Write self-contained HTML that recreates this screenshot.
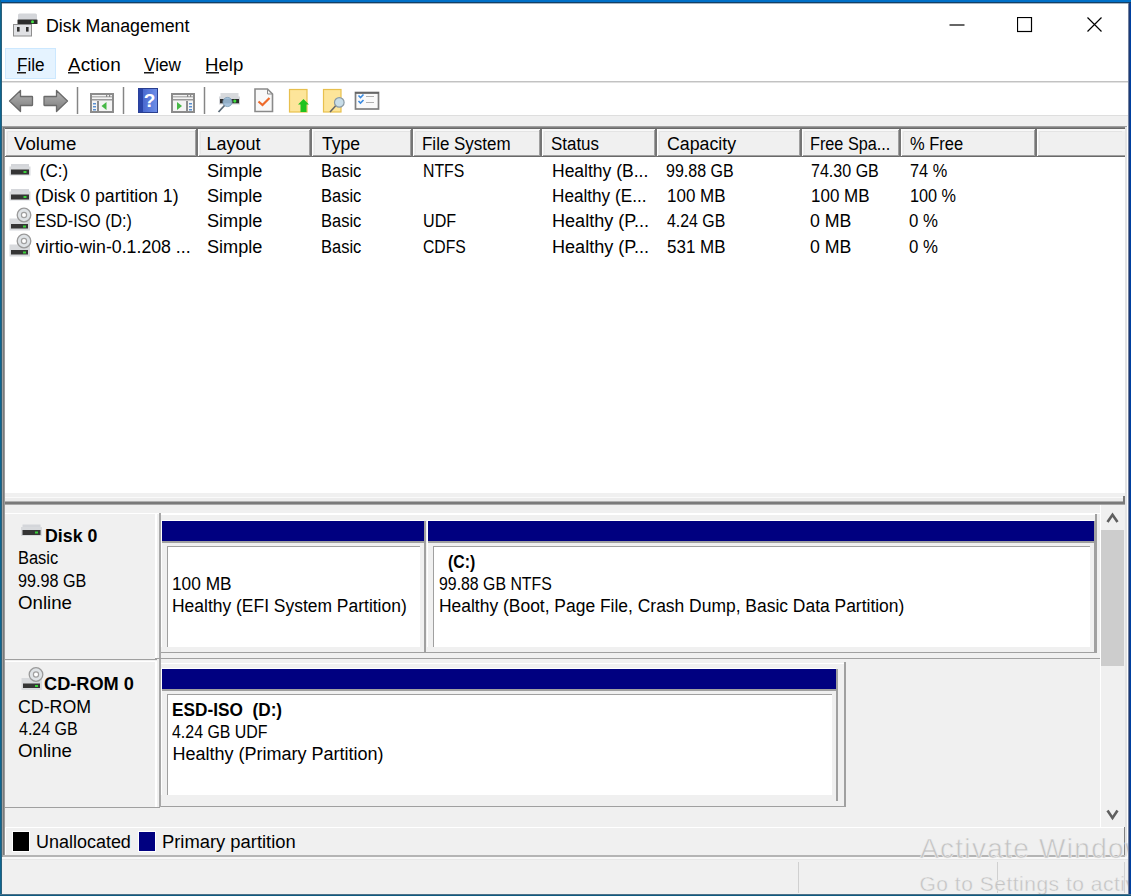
<!DOCTYPE html>
<html><head><meta charset="utf-8"><style>
html,body{margin:0;padding:0;}
body{width:1131px;height:896px;position:relative;overflow:hidden;font-family:"Liberation Sans", sans-serif;}
body>div,body>span,body>svg{position:absolute;}
.t{white-space:pre;line-height:normal;}
</style></head><body>
<div style="left:0px;top:0px;width:1131px;height:896px;background:#f0f0f0;"></div><div style="left:2px;top:3px;width:1126px;height:113px;background:#ffffff;"></div><div style="left:2px;top:81px;width:1126px;height:1px;background:#c2c2c2;"></div><div style="left:2px;top:82px;width:1126px;height:1px;background:#e2e2e2;"></div><div style="left:2px;top:115px;width:1126px;height:1px;background:#dedede;"></div><svg style="left:12px;top:12px" width="28" height="28" viewBox="0 0 28 28"><rect x="6" y="1.5" width="19" height="6.5" rx="1.5" fill="#d4d6da"/><rect x="5.5" y="7.5" width="20" height="4.5" rx="0.5" fill="#2c2c2c"/><circle cx="20.5" cy="9.8" r="1.5" fill="#46e046"/><rect x="1.5" y="12.5" width="18" height="11.5" fill="#e0e1e4" stroke="#8e8e8e" stroke-width="1"/><rect x="5" y="15" width="2.6" height="4.6" fill="#333"/><rect x="14" y="15" width="2.6" height="4.6" fill="#333"/></svg><span class="t" style="left:45.61px;top:15.71px;font-size:18px;font-weight:normal;color:#000;transform:scaleX(0.9889);transform-origin:0 0;">Disk Management</span><svg style="left:949px;top:17px" width="16" height="16" viewBox="0 0 16 16"><line x1="0.5" y1="8" x2="15.5" y2="8" stroke="#000" stroke-width="1.2"/></svg><svg style="left:1017px;top:17px" width="16" height="16" viewBox="0 0 16 16"><rect x="0.5" y="0.5" width="14" height="14" fill="none" stroke="#000" stroke-width="1.2"/></svg><svg style="left:1087px;top:17px" width="16" height="16" viewBox="0 0 16 16"><path d="M0.5 0.5L14.5 14.5M14.5 0.5L0.5 14.5" stroke="#000" stroke-width="1.2"/></svg><div style="left:5px;top:48px;width:51px;height:31px;background:#e5f3ff;box-sizing:border-box;border:1px solid #cce8ff;"></div><span class="t" style="left:17.05px;top:54.71px;font-size:18px;font-weight:normal;color:#000;transform:scaleX(0.9519);transform-origin:0 0;">File</span><div style="left:17px;top:72px;width:9px;height:1px;background:#1a1a1a;"></div><div style="left:17px;top:73px;width:9px;height:1px;background:#8a8a8a;"></div><span class="t" style="left:67.6px;top:54.71px;font-size:18px;font-weight:normal;color:#000;transform:scaleX(1.0531);transform-origin:0 0;">Action</span><div style="left:67.6px;top:72px;width:11.900000000000006px;height:1px;background:#1a1a1a;"></div><div style="left:67.6px;top:73px;width:11.900000000000006px;height:1px;background:#8a8a8a;"></div><span class="t" style="left:144.0px;top:54.71px;font-size:18px;font-weight:normal;color:#000;transform:scaleX(0.9538);transform-origin:0 0;">View</span><div style="left:144px;top:72px;width:10.199999999999989px;height:1px;background:#1a1a1a;"></div><div style="left:144px;top:73px;width:10.199999999999989px;height:1px;background:#8a8a8a;"></div><span class="t" style="left:204.77px;top:54.71px;font-size:18px;font-weight:normal;color:#000;transform:scaleX(1.0343);transform-origin:0 0;">Help</span><div style="left:205.8px;top:72px;width:13.0px;height:1px;background:#1a1a1a;"></div><div style="left:205.8px;top:73px;width:13.0px;height:1px;background:#8a8a8a;"></div><svg style="left:6px;top:86px" width="70" height="30" viewBox="0 0 70 30"><defs><linearGradient id="ga" x1="0" y1="0" x2="0" y2="1"><stop offset="0" stop-color="#b4b4b4"/><stop offset="1" stop-color="#7c7c7c"/></linearGradient><linearGradient id="gb" x1="0" y1="0" x2="1" y2="0"><stop offset="0" stop-color="#2a45a8"/><stop offset="0.25" stop-color="#2a45a8"/><stop offset="0.26" stop-color="#4a6ad0"/><stop offset="1" stop-color="#6f8fe8"/></linearGradient></defs><path d="M3.5 15 L14.5 4.5 L14.5 10.5 L26 10.5 Q26.5 10.5 26.5 11 L26.5 19 Q26.5 19.5 26 19.5 L14.5 19.5 L14.5 25.5 Z" fill="url(#ga)" stroke="#6a6a6a" stroke-width="1.3" stroke-linejoin="round"/><path d="M61.5 15 L50.5 4.5 L50.5 10.5 L38.5 10.5 Q38 10.5 38 11 L38 19 Q38 19.5 38.5 19.5 L50.5 19.5 L50.5 25.5 Z" fill="url(#ga)" stroke="#6a6a6a" stroke-width="1.3" stroke-linejoin="round"/></svg><div style="left:76px;top:87px;width:3px;height:27px;background:#e2e2e2;"></div><div style="left:77px;top:87px;width:1px;height:27px;background:#858585;"></div><div style="left:122px;top:87px;width:3px;height:27px;background:#e2e2e2;"></div><div style="left:123px;top:87px;width:1px;height:27px;background:#858585;"></div><div style="left:203px;top:87px;width:3px;height:27px;background:#e2e2e2;"></div><div style="left:204px;top:87px;width:1px;height:27px;background:#858585;"></div><svg style="left:90px;top:93px" width="24" height="20" viewBox="0 0 24 20"><rect x="1" y="1" width="22" height="18" fill="#f4f4f4" stroke="#8c8c8c" stroke-width="2"/><rect x="2" y="3" width="20" height="1.5" fill="#b8b8b8"/><rect x="2" y="6" width="20" height="1.5" fill="#9a9a9a"/><rect x="16" y="2" width="1.2" height="2" fill="#888"/><rect x="19" y="2" width="1.2" height="2" fill="#888"/><rect x="7" y="8" width="2" height="11" fill="#8c8c8c"/><rect x="3" y="10" width="3" height="1.5" fill="#5a90d0"/><rect x="3" y="13" width="3" height="1.5" fill="#5a90d0"/><rect x="3" y="16" width="3" height="1.5" fill="#5a90d0"/><path d="M11.5 13 L16.5 9 L16.5 17 Z" fill="#46b846"/></svg><svg style="left:171px;top:93px" width="24" height="20" viewBox="0 0 24 20"><rect x="1" y="1" width="22" height="18" fill="#f4f4f4" stroke="#8c8c8c" stroke-width="2"/><rect x="2" y="3" width="20" height="1.5" fill="#b8b8b8"/><rect x="2" y="6" width="20" height="1.5" fill="#9a9a9a"/><rect x="16" y="2" width="1.2" height="2" fill="#888"/><rect x="19" y="2" width="1.2" height="2" fill="#888"/><rect x="15" y="8" width="2" height="11" fill="#8c8c8c"/><rect x="18" y="10" width="3" height="1.5" fill="#5a90d0"/><rect x="18" y="13" width="3" height="1.5" fill="#5a90d0"/><rect x="18" y="16" width="3" height="1.5" fill="#5a90d0"/><path d="M11 13 L6 9 L6 17 Z" fill="#46b846"/></svg><svg style="left:138px;top:88px" width="20" height="25" viewBox="0 0 20 25"><defs><linearGradient id="ga" x1="0" y1="0" x2="0" y2="1"><stop offset="0" stop-color="#b4b4b4"/><stop offset="1" stop-color="#7c7c7c"/></linearGradient><linearGradient id="gb" x1="0" y1="0" x2="1" y2="0"><stop offset="0" stop-color="#2a45a8"/><stop offset="0.25" stop-color="#2a45a8"/><stop offset="0.26" stop-color="#4a6ad0"/><stop offset="1" stop-color="#6f8fe8"/></linearGradient></defs><rect x="0" y="0.5" width="19.5" height="24" fill="url(#gb)"/><rect x="0" y="0.5" width="19.5" height="24" fill="none" stroke="#2a3f90" stroke-width="1"/><text x="11.5" y="19" font-family="Liberation Sans" font-weight="bold" font-size="19" fill="#fff" text-anchor="middle">?</text></svg><svg style="left:216px;top:90px" width="26" height="24" viewBox="0 0 26 24"><rect x="4.5" y="3" width="18" height="4" fill="#d8dadd"/><rect x="3" y="6.5" width="21" height="8" fill="#d6d8dc"/><rect x="4" y="9" width="19" height="4.3" fill="#2e2e2e"/><circle cx="18.8" cy="11.1" r="1.6" fill="#3ee03e"/><circle cx="11.5" cy="12" r="4.6" fill="#9cbcd8" fill-opacity="0.9" stroke="#7a9ab4" stroke-width="0.8"/><line x1="8.5" y1="15.5" x2="2.5" y2="22" stroke="#5a6a78" stroke-width="1.8"/></svg><svg style="left:254px;top:88px" width="20" height="25" viewBox="0 0 20 25"><path d="M1 1 H13.5 L18.5 6 V23.5 H1 Z" fill="#f8f8f8" stroke="#8a8a8a" stroke-width="1.6"/><path d="M13.5 1 V6 H18.5" fill="none" stroke="#8a8a8a" stroke-width="1"/><path d="M4.5 13.5 L8.5 17 L15.5 10" fill="none" stroke="#ee6a2a" stroke-width="2.2"/></svg><svg style="left:288px;top:88px" width="24" height="26" viewBox="0 0 24 26"><rect x="1.5" y="1.5" width="17.5" height="22.5" fill="#fde59a" stroke="#e8c04e" stroke-width="1.2"/><path d="M15.5 11 L21 16.5 L18.5 16.5 L18.5 24 L12.5 24 L12.5 16.5 L10 16.5 Z" fill="#1fc21f"/></svg><svg style="left:322px;top:88px" width="26" height="26" viewBox="0 0 26 26"><rect x="1.5" y="1.5" width="17.5" height="22.5" fill="#fde59a" stroke="#e8c04e" stroke-width="1.2"/><circle cx="17.3" cy="14.4" r="4.8" fill="#c8dde8" stroke="#8a9aa4" stroke-width="1.2"/><line x1="13.5" y1="18" x2="8" y2="24" stroke="#666" stroke-width="1.6"/></svg><svg style="left:354px;top:91px" width="26" height="20" viewBox="0 0 26 20"><rect x="1.5" y="1.5" width="23" height="16.5" fill="#fafafa" stroke="#7e7e7e" stroke-width="1.7"/><rect x="1" y="1" width="24" height="1.8" fill="#666"/><path d="M4.5 4.5 L6.5 6.5 L9.5 3.5" fill="none" stroke="#3a8ae0" stroke-width="1.6"/><path d="M4.5 10 L6.5 12 L9.5 9" fill="none" stroke="#3a8ae0" stroke-width="1.6"/><rect x="12" y="5" width="8" height="1" fill="#b0b0b0"/><rect x="12" y="11" width="8" height="1" fill="#b0b0b0"/></svg><div style="left:2px;top:126px;width:1126px;height:731px;background:#f0f0f0;"></div><div style="left:2px;top:126px;width:1126px;height:1px;background:#a0a0a0;"></div><div style="left:2px;top:126px;width:1px;height:731px;background:#a0a0a0;"></div><div style="left:3px;top:127px;width:1124px;height:1px;background:#808080;"></div><div style="left:3px;top:128px;width:1124px;height:1px;background:#696969;"></div><div style="left:3px;top:127px;width:1px;height:729px;background:#7a7a7a;"></div><div style="left:4px;top:128px;width:1px;height:728px;background:#9a9a9a;"></div><div style="left:1125px;top:127px;width:2px;height:729px;background:#e3e3e3;"></div><div style="left:1127px;top:126px;width:1px;height:731px;background:#ffffff;"></div><div style="left:5px;top:129px;width:1120px;height:364px;background:#ffffff;"></div><div style="left:5px;top:129px;width:1px;height:726px;background:#ffffff;"></div><div style="left:3px;top:855px;width:1122px;height:2px;background:#b4b4b4;"></div><div style="left:2px;top:857px;width:1126px;height:2px;background:#f8f8f8;"></div><div style="left:2px;top:859px;width:1126px;height:1px;background:#e6e6e6;"></div><div style="left:5px;top:129px;width:1120px;height:28px;background:#f0f0f0;"></div><div style="left:5px;top:129px;width:193px;height:2px;background:#f8f8f8;"></div><div style="left:5px;top:129px;width:1px;height:27px;background:#ffffff;"></div><div style="left:7px;top:131px;width:188px;height:1px;background:#e4e4e4;"></div><div style="left:7px;top:131px;width:1px;height:23px;background:#e8e8e8;"></div><div style="left:6px;top:155px;width:191px;height:1px;background:#a0a0a0;"></div><div style="left:195px;top:130px;width:1px;height:26px;background:#a0a0a0;"></div><div style="left:5px;top:156px;width:193px;height:1px;background:#696969;"></div><div style="left:196px;top:129px;width:2px;height:28px;background:#767676;"></div><span class="t" style="left:13.6px;top:134.21px;font-size:18px;font-weight:normal;color:#000;transform:scaleX(1.0373);transform-origin:0 0;">Volume</span><div style="left:198px;top:129px;width:114px;height:2px;background:#f8f8f8;"></div><div style="left:198px;top:129px;width:1px;height:27px;background:#ffffff;"></div><div style="left:200px;top:131px;width:109px;height:1px;background:#e4e4e4;"></div><div style="left:200px;top:131px;width:1px;height:23px;background:#e8e8e8;"></div><div style="left:199px;top:155px;width:112px;height:1px;background:#a0a0a0;"></div><div style="left:309px;top:130px;width:1px;height:26px;background:#a0a0a0;"></div><div style="left:198px;top:156px;width:114px;height:1px;background:#696969;"></div><div style="left:310px;top:129px;width:2px;height:28px;background:#767676;"></div><span class="t" style="left:206.5px;top:134.21px;font-size:18px;font-weight:normal;color:#000;transform:scaleX(1.0000);transform-origin:0 0;">Layout</span><div style="left:312px;top:129px;width:101px;height:2px;background:#f8f8f8;"></div><div style="left:312px;top:129px;width:1px;height:27px;background:#ffffff;"></div><div style="left:314px;top:131px;width:96px;height:1px;background:#e4e4e4;"></div><div style="left:314px;top:131px;width:1px;height:23px;background:#e8e8e8;"></div><div style="left:313px;top:155px;width:99px;height:1px;background:#a0a0a0;"></div><div style="left:410px;top:130px;width:1px;height:26px;background:#a0a0a0;"></div><div style="left:312px;top:156px;width:101px;height:1px;background:#696969;"></div><div style="left:411px;top:129px;width:2px;height:28px;background:#767676;"></div><span class="t" style="left:321.6px;top:134.21px;font-size:18px;font-weight:normal;color:#000;transform:scaleX(0.9763);transform-origin:0 0;">Type</span><div style="left:413px;top:129px;width:129px;height:2px;background:#f8f8f8;"></div><div style="left:413px;top:129px;width:1px;height:27px;background:#ffffff;"></div><div style="left:415px;top:131px;width:124px;height:1px;background:#e4e4e4;"></div><div style="left:415px;top:131px;width:1px;height:23px;background:#e8e8e8;"></div><div style="left:414px;top:155px;width:127px;height:1px;background:#a0a0a0;"></div><div style="left:539px;top:130px;width:1px;height:26px;background:#a0a0a0;"></div><div style="left:413px;top:156px;width:129px;height:1px;background:#696969;"></div><div style="left:540px;top:129px;width:2px;height:28px;background:#767676;"></div><span class="t" style="left:422.16px;top:134.21px;font-size:18px;font-weight:normal;color:#000;transform:scaleX(0.9424);transform-origin:0 0;">File System</span><div style="left:542px;top:129px;width:115px;height:2px;background:#f8f8f8;"></div><div style="left:542px;top:129px;width:1px;height:27px;background:#ffffff;"></div><div style="left:544px;top:131px;width:110px;height:1px;background:#e4e4e4;"></div><div style="left:544px;top:131px;width:1px;height:23px;background:#e8e8e8;"></div><div style="left:543px;top:155px;width:113px;height:1px;background:#a0a0a0;"></div><div style="left:654px;top:130px;width:1px;height:26px;background:#a0a0a0;"></div><div style="left:542px;top:156px;width:115px;height:1px;background:#696969;"></div><div style="left:655px;top:129px;width:2px;height:28px;background:#767676;"></div><span class="t" style="left:550.96px;top:134.21px;font-size:18px;font-weight:normal;color:#000;transform:scaleX(0.9400);transform-origin:0 0;">Status</span><div style="left:657px;top:129px;width:145px;height:2px;background:#f8f8f8;"></div><div style="left:657px;top:129px;width:1px;height:27px;background:#ffffff;"></div><div style="left:659px;top:131px;width:140px;height:1px;background:#e4e4e4;"></div><div style="left:659px;top:131px;width:1px;height:23px;background:#e8e8e8;"></div><div style="left:658px;top:155px;width:143px;height:1px;background:#a0a0a0;"></div><div style="left:799px;top:130px;width:1px;height:26px;background:#a0a0a0;"></div><div style="left:657px;top:156px;width:145px;height:1px;background:#696969;"></div><div style="left:800px;top:129px;width:2px;height:28px;background:#767676;"></div><span class="t" style="left:666.51px;top:134.21px;font-size:18px;font-weight:normal;color:#000;transform:scaleX(0.9870);transform-origin:0 0;">Capacity</span><div style="left:802px;top:129px;width:99px;height:2px;background:#f8f8f8;"></div><div style="left:802px;top:129px;width:1px;height:27px;background:#ffffff;"></div><div style="left:804px;top:131px;width:94px;height:1px;background:#e4e4e4;"></div><div style="left:804px;top:131px;width:1px;height:23px;background:#e8e8e8;"></div><div style="left:803px;top:155px;width:97px;height:1px;background:#a0a0a0;"></div><div style="left:898px;top:130px;width:1px;height:26px;background:#a0a0a0;"></div><div style="left:802px;top:156px;width:99px;height:1px;background:#696969;"></div><div style="left:899px;top:129px;width:2px;height:28px;background:#767676;"></div><span class="t" style="left:810.2px;top:134.21px;font-size:18px;font-weight:normal;color:#000;transform:scaleX(0.9023);transform-origin:0 0;">Free Spa...</span><div style="left:901px;top:129px;width:136px;height:2px;background:#f8f8f8;"></div><div style="left:901px;top:129px;width:1px;height:27px;background:#ffffff;"></div><div style="left:903px;top:131px;width:131px;height:1px;background:#e4e4e4;"></div><div style="left:903px;top:131px;width:1px;height:23px;background:#e8e8e8;"></div><div style="left:902px;top:155px;width:134px;height:1px;background:#a0a0a0;"></div><div style="left:1034px;top:130px;width:1px;height:26px;background:#a0a0a0;"></div><div style="left:901px;top:156px;width:136px;height:1px;background:#696969;"></div><div style="left:1035px;top:129px;width:2px;height:28px;background:#767676;"></div><span class="t" style="left:909.98px;top:134.21px;font-size:18px;font-weight:normal;color:#000;transform:scaleX(0.9161);transform-origin:0 0;">% Free</span><div style="left:1037px;top:129px;width:88px;height:2px;background:#f8f8f8;"></div><div style="left:1037px;top:129px;width:1px;height:27px;background:#ffffff;"></div><div style="left:1039px;top:131px;width:83px;height:1px;background:#e4e4e4;"></div><div style="left:1039px;top:131px;width:1px;height:23px;background:#e8e8e8;"></div><div style="left:1038px;top:155px;width:87px;height:1px;background:#a0a0a0;"></div><div style="left:1037px;top:156px;width:88px;height:1px;background:#696969;"></div><svg style="left:8px;top:162px" width="24" height="14" viewBox="0 0 24 14"><rect x="3.0" y="2" width="18" height="3" fill="#d4d6da"/><rect x="1.5" y="4.5" width="21" height="9" fill="#d8dadd"/><rect x="3.0" y="7.5" width="18" height="5" fill="#353535"/><rect x="15.5" y="9" width="3" height="2" fill="#3ad23a"/></svg><span class="t" style="left:34.5px;top:160.71px;font-size:18px;font-weight:normal;color:#000;transform:scaleX(0.9500);transform-origin:0 0;"> (C:)</span><span class="t" style="left:206.59px;top:160.71px;font-size:18px;font-weight:normal;color:#000;transform:scaleX(1.0075);transform-origin:0 0;">Simple</span><span class="t" style="left:320.68px;top:160.71px;font-size:18px;font-weight:normal;color:#000;transform:scaleX(0.9163);transform-origin:0 0;">Basic</span><span class="t" style="left:422.52px;top:160.71px;font-size:18px;font-weight:normal;color:#000;transform:scaleX(0.8800);transform-origin:0 0;">NTFS</span><span class="t" style="left:551.73px;top:160.71px;font-size:18px;font-weight:normal;color:#000;transform:scaleX(0.9722);transform-origin:0 0;">Healthy (B...</span><span class="t" style="left:666.41px;top:160.71px;font-size:18px;font-weight:normal;color:#000;transform:scaleX(0.8892);transform-origin:0 0;">99.88 GB</span><span class="t" style="left:810.61px;top:160.71px;font-size:18px;font-weight:normal;color:#000;transform:scaleX(0.8919);transform-origin:0 0;">74.30 GB</span><span class="t" style="left:909.59px;top:160.71px;font-size:18px;font-weight:normal;color:#000;transform:scaleX(0.9075);transform-origin:0 0;">74 %</span><svg style="left:8px;top:187px" width="24" height="14" viewBox="0 0 24 14"><rect x="3.0" y="2" width="18" height="3" fill="#d4d6da"/><rect x="1.5" y="4.5" width="21" height="9" fill="#d8dadd"/><rect x="3.0" y="7.5" width="18" height="5" fill="#353535"/><rect x="15.5" y="9" width="3" height="2" fill="#3ad23a"/></svg><span class="t" style="left:34.72px;top:186.01px;font-size:18px;font-weight:normal;color:#000;transform:scaleX(0.9833);transform-origin:0 0;">(Disk 0 partition 1)</span><span class="t" style="left:206.59px;top:186.01px;font-size:18px;font-weight:normal;color:#000;transform:scaleX(1.0075);transform-origin:0 0;">Simple</span><span class="t" style="left:320.68px;top:186.01px;font-size:18px;font-weight:normal;color:#000;transform:scaleX(0.9163);transform-origin:0 0;">Basic</span><span class="t" style="left:423px;top:186.01px;font-size:18px;font-weight:normal;color:#000;"></span><span class="t" style="left:551.75px;top:186.01px;font-size:18px;font-weight:normal;color:#000;transform:scaleX(0.9536);transform-origin:0 0;">Healthy (E...</span><span class="t" style="left:666.76px;top:186.01px;font-size:18px;font-weight:normal;color:#000;transform:scaleX(0.9433);transform-origin:0 0;">100 MB</span><span class="t" style="left:810.56px;top:186.01px;font-size:18px;font-weight:normal;color:#000;transform:scaleX(0.9433);transform-origin:0 0;">100 MB</span><span class="t" style="left:909.6px;top:186.01px;font-size:18px;font-weight:normal;color:#000;transform:scaleX(0.9020);transform-origin:0 0;">100 %</span><svg style="left:8px;top:207px" width="24" height="25" viewBox="0 0 24 25"><rect x="1.5" y="11.5" width="20.5" height="12" fill="#d8dadd"/><rect x="3" y="17.0" width="17" height="4.5" fill="#353535"/><rect x="15" y="18.5" width="3" height="2" fill="#3ad23a"/><circle cx="16" cy="8.0" r="6.8" fill="#dfe3e6" stroke="#9a9a9a" stroke-width="1.3"/><circle cx="16" cy="8.0" r="2.6" fill="#fff" stroke="#a0a0a0" stroke-width="1.2"/></svg><span class="t" style="left:35.11px;top:211.31px;font-size:18px;font-weight:normal;color:#000;transform:scaleX(0.8879);transform-origin:0 0;">ESD-ISO (D:)</span><span class="t" style="left:206.59px;top:211.31px;font-size:18px;font-weight:normal;color:#000;transform:scaleX(1.0075);transform-origin:0 0;">Simple</span><span class="t" style="left:320.68px;top:211.31px;font-size:18px;font-weight:normal;color:#000;transform:scaleX(0.9163);transform-origin:0 0;">Basic</span><span class="t" style="left:422.51px;top:211.31px;font-size:18px;font-weight:normal;color:#000;transform:scaleX(0.8944);transform-origin:0 0;">UDF</span><span class="t" style="left:551.7px;top:211.31px;font-size:18px;font-weight:normal;color:#000;transform:scaleX(1.0032);transform-origin:0 0;">Healthy (P...</span><span class="t" style="left:667.0px;top:211.31px;font-size:18px;font-weight:normal;color:#000;transform:scaleX(0.8815);transform-origin:0 0;">4.24 GB</span><span class="t" style="left:810.01px;top:211.31px;font-size:18px;font-weight:normal;color:#000;transform:scaleX(0.9850);transform-origin:0 0;">0 MB</span><span class="t" style="left:909.07px;top:211.31px;font-size:18px;font-weight:normal;color:#000;transform:scaleX(0.9333);transform-origin:0 0;">0 %</span><svg style="left:8px;top:233px" width="24" height="25" viewBox="0 0 24 25"><rect x="1.5" y="11.5" width="20.5" height="12" fill="#d8dadd"/><rect x="3" y="17.0" width="17" height="4.5" fill="#353535"/><rect x="15" y="18.5" width="3" height="2" fill="#3ad23a"/><circle cx="16" cy="8.0" r="6.8" fill="#dfe3e6" stroke="#9a9a9a" stroke-width="1.3"/><circle cx="16" cy="8.0" r="2.6" fill="#fff" stroke="#a0a0a0" stroke-width="1.2"/></svg><span class="t" style="left:35.7px;top:236.71px;font-size:18px;font-weight:normal;color:#000;transform:scaleX(0.9846);transform-origin:0 0;">virtio-win-0.1.208 ...</span><span class="t" style="left:206.59px;top:236.71px;font-size:18px;font-weight:normal;color:#000;transform:scaleX(1.0075);transform-origin:0 0;">Simple</span><span class="t" style="left:320.68px;top:236.71px;font-size:18px;font-weight:normal;color:#000;transform:scaleX(0.9163);transform-origin:0 0;">Basic</span><span class="t" style="left:422.53px;top:236.71px;font-size:18px;font-weight:normal;color:#000;transform:scaleX(0.8745);transform-origin:0 0;">CDFS</span><span class="t" style="left:551.7px;top:236.71px;font-size:18px;font-weight:normal;color:#000;transform:scaleX(1.0032);transform-origin:0 0;">Healthy (P...</span><span class="t" style="left:666.76px;top:236.71px;font-size:18px;font-weight:normal;color:#000;transform:scaleX(0.9433);transform-origin:0 0;">531 MB</span><span class="t" style="left:810.01px;top:236.71px;font-size:18px;font-weight:normal;color:#000;transform:scaleX(0.9850);transform-origin:0 0;">0 MB</span><span class="t" style="left:909.07px;top:236.71px;font-size:18px;font-weight:normal;color:#000;transform:scaleX(0.9333);transform-origin:0 0;">0 %</span><div style="left:5px;top:493px;width:1120px;height:4px;background:#f0f0f0;"></div><div style="left:5px;top:497px;width:1120px;height:1px;background:#fafafa;"></div><div style="left:5px;top:498px;width:1120px;height:3px;background:#ececec;"></div><div style="left:5px;top:501px;width:1120px;height:1px;background:#b0b0b0;"></div><div style="left:5px;top:502px;width:1120px;height:2px;background:#7a7a7a;"></div><div style="left:5px;top:504px;width:1120px;height:1px;background:#a8a8a8;"></div><div style="left:1123px;top:496px;width:2px;height:8px;background:#7a7a7a;"></div><div style="left:5px;top:505px;width:1096px;height:322px;background:#f0f0f0;"></div><div style="left:1100px;top:505px;width:1px;height:322px;background:#ffffff;"></div><div style="left:1101px;top:505px;width:24px;height:322px;background:#f0f0f0;"></div><div style="left:1101px;top:530px;width:23px;height:136px;background:#cdcdcd;"></div><svg style="left:1104px;top:510px" width="17" height="15" viewBox="0 0 17 15"><path d="M3.5 12 L8.5 4.8 L13.5 12" fill="none" stroke="#5f5f5f" stroke-width="2.6"/></svg><svg style="left:1104px;top:806px" width="17" height="15" viewBox="0 0 17 15"><path d="M3.5 4.5 L8.5 12 L13.5 4.5" fill="none" stroke="#5f5f5f" stroke-width="2.6"/></svg><div style="left:5px;top:513px;width:1095px;height:1px;background:#ffffff;"></div><div style="left:155px;top:513px;width:2px;height:146px;background:#ffffff;"></div><div style="left:159px;top:513px;width:2px;height:146px;background:#a8a8a8;"></div><div style="left:161px;top:514px;width:936px;height:1px;background:#ffffff;"></div><div style="left:5px;top:659px;width:152px;height:1px;background:#a0a0a0;"></div><div style="left:155px;top:658px;width:945px;height:1px;background:#a0a0a0;"></div><div style="left:161px;top:652px;width:936px;height:1px;background:#a0a0a0;"></div><div style="left:1095px;top:514px;width:2px;height:139px;background:#a0a0a0;"></div><svg style="left:19px;top:522px" width="26" height="18" viewBox="0 0 26 18"><rect x="3.5" y="2.5" width="18" height="3" fill="#d4d6da"/><rect x="2" y="5.0" width="21" height="9" fill="#d8dadd"/><rect x="3.5" y="8.0" width="18" height="5" fill="#353535"/><rect x="16" y="9.5" width="3" height="2" fill="#3ad23a"/></svg><span class="t" style="left:45.11px;top:525.71px;font-size:18px;font-weight:bold;color:#000;transform:scaleX(0.9863);transform-origin:0 0;">Disk 0</span><span class="t" style="left:18.09px;top:547.71px;font-size:18px;font-weight:normal;color:#000;transform:scaleX(0.9140);transform-origin:0 0;">Basic</span><span class="t" style="left:17.6px;top:570.51px;font-size:18px;font-weight:normal;color:#000;transform:scaleX(0.8986);transform-origin:0 0;">99.98 GB</span><span class="t" style="left:17.96px;top:592.81px;font-size:18px;font-weight:normal;color:#000;transform:scaleX(1.0380);transform-origin:0 0;">Online</span><div style="left:161px;top:520px;width:263px;height:1px;background:#ffffff;"></div><div style="left:161px;top:520px;width:1px;height:127px;background:#ffffff;"></div><div style="left:162px;top:521px;width:262px;height:20px;background:#000080;"></div><div style="left:424px;top:521px;width:2px;height:132px;background:#a0a0a0;"></div><div style="left:162px;top:541px;width:262px;height:2px;background:#a0a0a0;"></div><div style="left:167px;top:546px;width:253px;height:101px;background:#ffffff;"></div><div style="left:167px;top:546px;width:253px;height:1px;background:#a0a0a0;"></div><div style="left:167px;top:546px;width:1px;height:101px;background:#a0a0a0;"></div><span class="t" style="left:171.84px;top:573.71px;font-size:18px;font-weight:normal;color:#000;transform:scaleX(0.9600);transform-origin:0 0;">100 MB</span><span class="t" style="left:171.83px;top:596.21px;font-size:18px;font-weight:normal;color:#000;transform:scaleX(0.9696);transform-origin:0 0;">Healthy (EFI System Partition)</span><div style="left:427px;top:520px;width:667px;height:1px;background:#ffffff;"></div><div style="left:427px;top:520px;width:1px;height:127px;background:#ffffff;"></div><div style="left:428px;top:521px;width:666px;height:20px;background:#000080;"></div><div style="left:1094px;top:521px;width:2px;height:132px;background:#a0a0a0;"></div><div style="left:428px;top:541px;width:666px;height:2px;background:#a0a0a0;"></div><div style="left:433px;top:546px;width:657px;height:101px;background:#ffffff;"></div><div style="left:433px;top:546px;width:657px;height:1px;background:#a0a0a0;"></div><div style="left:433px;top:546px;width:1px;height:101px;background:#a0a0a0;"></div><span class="t" style="left:448.12px;top:551.71px;font-size:18px;font-weight:bold;color:#000;transform:scaleX(0.8793);transform-origin:0 0;">(C:)</span><span class="t" style="left:439.32px;top:573.71px;font-size:18px;font-weight:normal;color:#000;transform:scaleX(0.8810);transform-origin:0 0;">99.88 GB NTFS</span><span class="t" style="left:438.83px;top:596.21px;font-size:18px;font-weight:normal;color:#000;transform:scaleX(0.9690);transform-origin:0 0;">Healthy (Boot, Page File, Crash Dump, Basic Data Partition)</span><div style="left:5px;top:661px;width:152px;height:1px;background:#ffffff;"></div><div style="left:155px;top:661px;width:2px;height:146px;background:#ffffff;"></div><div style="left:159px;top:659px;width:2px;height:148px;background:#a8a8a8;"></div><div style="left:161px;top:663px;width:684px;height:1px;background:#ffffff;"></div><div style="left:5px;top:807px;width:155px;height:1px;background:#a0a0a0;"></div><div style="left:161px;top:806px;width:684px;height:1px;background:#a0a0a0;"></div><div style="left:844px;top:662px;width:2px;height:145px;background:#a0a0a0;"></div><svg style="left:19px;top:665px" width="26" height="27" viewBox="0 0 26 27"><rect x="2.5" y="13" width="20.5" height="12" fill="#d8dadd"/><rect x="4" y="18.5" width="17" height="4.5" fill="#353535"/><rect x="16" y="20" width="3" height="2" fill="#3ad23a"/><circle cx="17" cy="9.5" r="6.8" fill="#dfe3e6" stroke="#9a9a9a" stroke-width="1.3"/><circle cx="17" cy="9.5" r="2.6" fill="#fff" stroke="#a0a0a0" stroke-width="1.2"/></svg><span class="t" style="left:44.39px;top:674.31px;font-size:18px;font-weight:bold;color:#000;transform:scaleX(1.0103);transform-origin:0 0;">CD-ROM 0</span><span class="t" style="left:18.01px;top:696.71px;font-size:18px;font-weight:normal;color:#000;transform:scaleX(0.9875);transform-origin:0 0;">CD-ROM</span><span class="t" style="left:18.5px;top:719.01px;font-size:18px;font-weight:normal;color:#000;transform:scaleX(0.8892);transform-origin:0 0;">4.24 GB</span><span class="t" style="left:17.96px;top:741.31px;font-size:18px;font-weight:normal;color:#000;transform:scaleX(1.0380);transform-origin:0 0;">Online</span><div style="left:161px;top:668px;width:675px;height:1px;background:#ffffff;"></div><div style="left:161px;top:668px;width:1px;height:127px;background:#ffffff;"></div><div style="left:162px;top:669px;width:674px;height:20px;background:#000080;"></div><div style="left:836px;top:669px;width:2px;height:132px;background:#a0a0a0;"></div><div style="left:162px;top:689px;width:674px;height:2px;background:#a0a0a0;"></div><div style="left:167px;top:694px;width:665px;height:101px;background:#ffffff;"></div><div style="left:167px;top:694px;width:665px;height:1px;background:#a0a0a0;"></div><div style="left:167px;top:694px;width:1px;height:101px;background:#a0a0a0;"></div><span class="t" style="left:172.14px;top:699.61px;font-size:18px;font-weight:bold;color:#000;transform:scaleX(0.9575);transform-origin:0 0;">ESD-ISO  (D:)</span><span class="t" style="left:172.4px;top:721.91px;font-size:18px;font-weight:normal;color:#000;transform:scaleX(0.8843);transform-origin:0 0;">4.24 GB UDF</span><span class="t" style="left:172.5px;top:744.31px;font-size:18px;font-weight:normal;color:#000;transform:scaleX(1.0000);transform-origin:0 0;">Healthy (Primary Partition)</span><div style="left:5px;top:827px;width:1120px;height:1px;background:#ffffff;"></div><div style="left:1124px;top:827px;width:1px;height:28px;background:#808080;"></div><div style="left:12px;top:831px;width:18px;height:21px;background:#ffffff;"></div><div style="left:13px;top:832px;width:16px;height:19px;background:#000000;"></div><span class="t" style="left:35.8px;top:831.91px;font-size:18px;font-weight:normal;color:#000;transform:scaleX(0.9978);transform-origin:0 0;">Unallocated</span><div style="left:138px;top:831px;width:18px;height:21px;background:#ffffff;"></div><div style="left:139px;top:832px;width:16px;height:19px;background:#000080;"></div><span class="t" style="left:161.68px;top:831.91px;font-size:18px;font-weight:normal;color:#000;transform:scaleX(1.0202);transform-origin:0 0;">Primary partition</span><div style="left:798px;top:862px;width:1px;height:31px;background:#d0d0d0;"></div><div style="left:997px;top:862px;width:1px;height:31px;background:#d0d0d0;"></div><div style="left:1124px;top:862px;width:1px;height:31px;background:#d0d0d0;"></div><span class="t" style="left:920px;top:833.16px;font-size:28px;font-weight:normal;color:#c3c3c3;letter-spacing:1.3px;-webkit-text-stroke:0.6px #f0f0f0;">Activate Windows</span><span class="t" style="left:919.5px;top:871.50px;font-size:21px;font-weight:normal;color:#c3c3c3;letter-spacing:0.5px;-webkit-text-stroke:0.4px #f0f0f0;">Go to Settings to activate Windows.</span><div style="left:0px;top:0px;width:1131px;height:2px;background:#0070c8;"></div><div style="left:0px;top:2px;width:1131px;height:1px;background:#123f66;"></div><div style="left:0px;top:3px;width:1131px;height:1px;background:#a9b6c2;"></div><div style="left:0px;top:0px;width:1px;height:896px;background:#0e6590;"></div><div style="left:1px;top:3px;width:1px;height:893px;background:#2b607a;"></div><div style="left:1128px;top:3px;width:1px;height:893px;background:#7080a0;"></div><div style="left:1129px;top:3px;width:1px;height:893px;background:#1a3a78;"></div><div style="left:1130px;top:3px;width:1px;height:893px;background:#0040a0;"></div><div style="left:0px;top:894px;width:1131px;height:1px;background:#4a7088;"></div><div style="left:0px;top:895px;width:1131px;height:1px;background:#0f5a80;"></div>
</body></html>
